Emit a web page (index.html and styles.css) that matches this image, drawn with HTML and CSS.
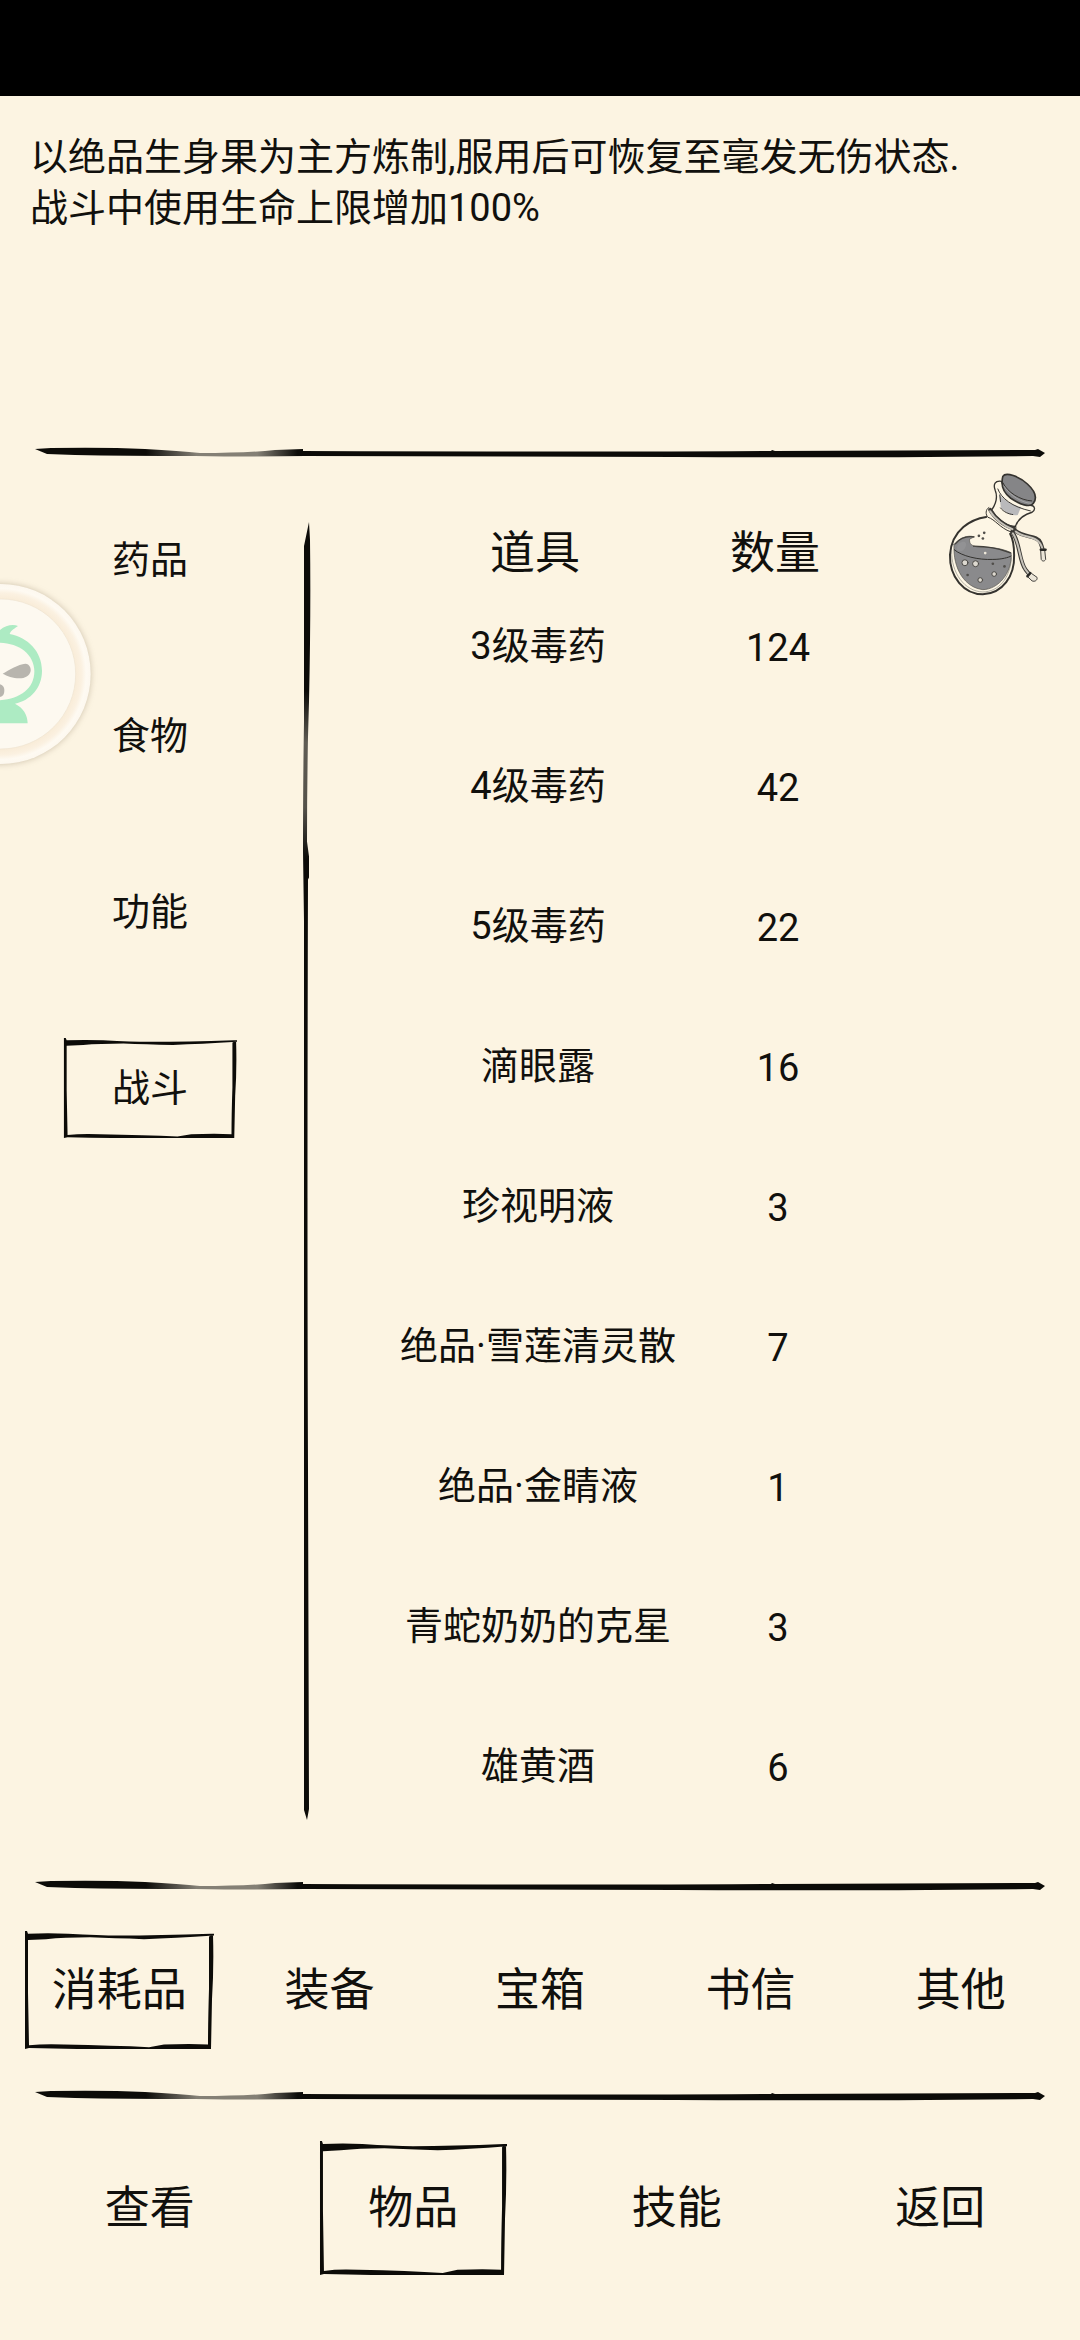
FILE: index.html
```
<!DOCTYPE html>
<html lang="zh-CN">
<head>
    <meta charset="UTF-8">
    <meta name="viewport" content="width=device-width, initial-scale=1">
    <title>物品</title>
    <link rel="stylesheet" href="styles.css">
</head>
<body>

    <!-- 公用的手绘线条 -->
    <svg class="defs" aria-hidden="true">
        <linearGradient id="fade">
            <stop offset="0" stop-color="#0c0b08"/>
            <stop offset=".11" stop-color="#0c0b08"/>
            <stop offset=".16" stop-color="#0c0b08" stop-opacity=".5"/>
            <stop offset=".22" stop-color="#0c0b08" stop-opacity=".5"/>
            <stop offset=".26" stop-color="#0c0b08"/>
            <stop offset="1" stop-color="#0c0b08"/>
        </linearGradient>
        <linearGradient id="fade-v" x1="0" y1="0" x2="0" y2="1">
            <stop offset="0" stop-color="#0c0b08"/>
            <stop offset=".13" stop-color="#0c0b08"/>
            <stop offset=".17" stop-color="#0c0b08" stop-opacity=".65"/>
            <stop offset=".22" stop-color="#0c0b08" stop-opacity=".7"/>
            <stop offset=".26" stop-color="#0c0b08"/>
            <stop offset="1" stop-color="#0c0b08"/>
        </linearGradient>
        <radialGradient id="ring" gradientUnits="userSpaceOnUse" cx="2" cy="342" r="270">
            <stop offset=".82" stop-color="#f8ebd6"/>
            <stop offset=".9" stop-color="#fbf1e1"/>
            <stop offset=".95" stop-color="#fefaf2"/>
            <stop offset="1" stop-color="#fdf8ef"/>
        </radialGradient>
        <symbol id="line" viewBox="0 0 1010 16" preserveAspectRatio="none">
            <path fill="url(#fade)" d="M0 5 L16 4 Q70 3 110 5 Q145 7 165 9 Q210 9 240 6 L268 5 L268 7 Q620 8 736 7 L737 6 L740 7 L1000 6 L1003 5 L1010 9 L1005 13 L998 12 Q800 14 640 13 L270 12 Q220 13 160 12 Q90 12 40 11 L12 10 Z"/>
        </symbol>
        <symbol id="line-v" viewBox="0 0 14 1300" preserveAspectRatio="none">
            <path fill="url(#fade-v)" d="M9 0 L10 18 Q11 90 9 180 L8 215 Q7 270 7 320 L9 335 L9 356 L8 358 Q7 700 8 950 L9 1289 L7 1300 L4 1290 L4 950 Q4 620 4 400 L3 330 Q3 260 4 200 L4 100 L4 24 Z"/>
        </symbol>
        <symbol id="frame" viewBox="0 0 190 130" preserveAspectRatio="none">
            <path d="M1 0 L3 0 L4 3 Q24 2 44 3 Q75 5 95 5 Q135 5 187 3 L190 3 L190 5 Q150 8 120 9 Q90 8 66 7 Q40 7 22 9 L4 10 L4 68 L5 126 Q20 124 40 125 Q90 126 125 128 L140 125 Q168 124 184 125 Q184 100 185 64 L185 6 L189 4 Q190 40 188 75 L187 130 L140 130 Q80 131 5 129 L1 130 L1 68 Z"/>
        </symbol>
    </svg>

    <div class="page">
        <div class="status"></div>

        <div class="desc">
            <p>以绝品生身果为主方炼制,服用后可恢复至毫发无伤状态.</p>
            <p>战斗中使用生命上限增加100%</p>
        </div>

        <svg class="line"><use href="#line"/></svg>

        <div class="main">
            <div class="category">
                <button>药品</button>
                <button>食物</button>
                <button>功能</button>
                <button class="current">战斗<svg class="frame"><use href="#frame"/></svg></button>
            </div>
            <svg class="line-v"><use href="#line-v"/></svg>
            <table class="items">
                <thead>
                    <tr><th class="name">道具</th><th class="num">数量</th></tr>
                </thead>
                <tbody>
                    <tr><td>3级毒药</td><td class="num">124</td></tr>
                    <tr><td>4级毒药</td><td class="num">42</td></tr>
                    <tr><td>5级毒药</td><td class="num">22</td></tr>
                    <tr><td>滴眼露</td><td class="num">16</td></tr>
                    <tr><td>珍视明液</td><td class="num">3</td></tr>
                    <tr><td>绝品·雪莲清灵散</td><td class="num">7</td></tr>
                    <tr><td>绝品·金睛液</td><td class="num">1</td></tr>
                    <tr><td>青蛇奶奶的克星</td><td class="num">3</td></tr>
                    <tr><td>雄黄酒</td><td class="num">6</td></tr>
                </tbody>
            </table>
            <svg class="bottle" viewBox="50 60 310 385" fill="none" stroke-linecap="round" stroke-linejoin="round">
                <!-- 瓶身 -->
                <path d="M168 201 C125 207 64 238 59 315 C57 382 101 434 158 434 C218 432 254 378 252 316 C252 288 249 268 240 252" fill="#fdf6e5" stroke="#35332f" stroke-width="6"/>
                <path d="M64 302 C62 370 103 425 158 427 C205 426 240 387 244 324" stroke="#8b8982" stroke-width="2"/>
                <!-- 药水 -->
                <path d="M71 284 C88 264 111 255 132 261 L118 268 C116 282 126 291 148 292 C187 291 222 298 243 309 C247 369 205 419 158 420 C105 414 67 359 71 284 Z" fill="#8a8a8c" stroke="#55534f" stroke-width="2"/>
                <path d="M72 300 C94 319 144 331 188 329 C215 329 235 323 243 319" stroke="#33322f" stroke-width="3"/>
                <path d="M75 282 C89 265 110 258 131 261 M130 289 C175 289 213 298 241 309" stroke="#42403c" stroke-width="4"/>
                <path d="M82 286 C94 270 113 274 106 291 C99 308 87 306 78 300" fill="#929294"/>
                <g fill="#ddd9d0" stroke="#4b4945" stroke-width="3">
                    <circle cx="104" cy="339" r="9"/>
                    <circle cx="136" cy="342" r="9"/>
                    <circle cx="192" cy="373" r="7"/>
                    <circle cx="150" cy="391" r="7"/>
                </g>
                <g fill="#504e4a">
                    <circle cx="112" cy="376" r="4"/>
                    <circle cx="188" cy="342" r="4"/>
                    <circle cx="223" cy="350" r="4"/>
                    <circle cx="146" cy="258" r="4"/>
                    <circle cx="162" cy="249" r="4"/>
                    <circle cx="158" cy="266" r="4"/>
                </g>
                <circle cx="165" cy="310" r="4" fill="#eee8da"/>
                <!-- 瓶颈和瓶塞 -->
                <path d="M214 94 C195 91 188 102 195 121 C202 138 200 158 184 181 C201 209 230 230 256 230 C263 207 285 193 306 187 C319 178 313 166 300 166 L217 102 Z" fill="#fdf6e5" stroke="#35332f" stroke-width="4"/>
                <path d="M207 133 L212 172 C225 190 246 199 263 195 L273 171 C244 166 225 151 207 133 Z" fill="#b9b9bb"/>
                <path d="M203 117 C213 145 246 171 301 183 M211 174 C221 187 235 192 248 194 M209 135 L211 155" stroke="#3a3834" stroke-width="3"/>
                <path d="M218 79 C227 64 268 80 292 102 C316 124 321 145 310 160 C300 175 269 163 242 145 C216 125 212 102 218 79 Z" fill="#858587" stroke="#35332f" stroke-width="5"/>
                <path d="M218 98 C232 127 270 151 305 153" stroke="#35332f" stroke-width="3"/>
                <path d="M221 108 C239 137 278 160 303 160" stroke="#b6b6b6" stroke-width="2"/>
                <!-- 绳子 -->
                <g stroke="#3b3935" stroke-width="12">
                    <path d="M180 180 C193 204 223 229 250 235"/>
                    <path d="M252 240 C281 266 320 254 331 278 C335 288 336 292 338 299"/>
                    <path d="M246 246 C270 276 266 333 286 359 L299 375"/>
                </g>
                <g stroke="#c6c2b9" stroke-width="6">
                    <path d="M180 184 C193 207 223 229 247 238"/>
                    <path d="M256 244 C281 266 318 257 331 282 C335 289 336 292 337 297"/>
                    <path d="M248 250 C269 278 268 334 286 359 L297 373"/>
                </g>
                <path d="M176 173 C165 178 166 195 173 202 C194 208 210 235 242 246 C257 249 260 235 256 228" stroke="#35332f" stroke-width="3"/>
                <path d="M333 300 L344 300 L347 329 C343 336 336 335 334 330 Z M291 378 L304 371 L321 383 C323 392 314 397 307 394 Z" fill="#ece6d8" stroke="#44423e" stroke-width="3"/>
                <path d="M332 300 L347 300 M292 380 L301 370" stroke="#292825" stroke-width="7"/>
            </svg>
        </div>

        <svg class="line"><use href="#line"/></svg>

        <div class="tabs">
            <button class="current">消耗品<svg class="frame"><use href="#frame"/></svg></button>
            <button>装备</button>
            <button>宝箱</button>
            <button>书信</button>
            <button>其他</button>
        </div>

        <svg class="line"><use href="#line"/></svg>

        <div class="nav">
            <button>查看</button>
            <button class="current">物品<svg class="frame"><use href="#frame"/></svg></button>
            <button>技能</button>
            <button>返回</button>
        </div>

        <!-- 悬浮球 -->
        <button class="ball" aria-label="悬浮球">
            <svg viewBox="0 0 360 660">
                <circle class="ball-outer" cx="2" cy="342" r="270"/>
                <circle class="ball-inner" cx="2" cy="342" r="225"/>
                <path fill="#adebc3" d="M0 210 C16 196 39 192 54 198 C46 205 33 209 29 222 C84 232 126 275 126 332 C126 384 91 421 45 431 C69 443 83 464 83 490 L0 490 Z"/>
                <path fill="#fdf9f0" d="M0 248 C58 250 102 282 103 334 C103 385 62 416 0 421 Z"/>
                <path fill="#b8b5ae" d="M8 341 C29 329 54 313 76 311 C89 312 93 324 92 333 C89 348 75 355 58 355 C39 355 21 348 8 341 Z"/>
                <path fill="#b8b5ae" d="M0 373 C10 376 13 383 13 392 C13 402 9 409 0 411 Z"/>
            </svg>
        </button>
    </div>

</body>
</html>
```

FILE: styles.css
```
*{
    margin: 0;
    padding: 0;
    box-sizing: border-box;
}
body{
    background-color: #fcf4e2;
    color: #11100d;
    font-family: Roboto, "Noto Sans CJK SC", sans-serif;
    font-size: 38px;
    line-height: 51px;
}
button{
    position: relative;
    border: none;
    background: none;
    color: inherit;
    font: inherit;
    cursor: pointer;
}
.defs{
    position: absolute;
    width: 0;
    height: 0;
}
.page{
    position: relative;
    display: flex;
    flex-direction: column;
    min-height: 100vh;
}
.status{
    height: 96px;
    background-color: #000;
}
.desc{
    min-height: 348px;
    padding: 36px 30px;
}
.line{
    display: block;
    height: 16px;
    margin: 0 35px;
}
.frame{
    position: absolute;
    left: 0;
    top: 0;
    width: 100%;
    height: 100%;
    fill: #0c0b08;
}

/* 中间区域 */
.main{
    display: flex;
    padding-bottom: 41px;
}
.category{
    display: flex;
    flex-direction: column;
    align-items: center;
    gap: 76px;
    width: 300px;
    padding-top: 50px;
}
.category button{
    width: 174px;
    height: 100px;
}
.line-v{
    width: 14px;
    height: auto;
    margin: 62px 0 16px;
}
.items{
    margin: 72px 0 0 74px;
    border-collapse: collapse;
    text-align: center;
}
.items th{
    height: 44px;
    padding-right: 6px;
    font-size: 45px;
    font-weight: 400;
    line-height: 44px;
}
.items td{
    height: 140px;
}
.items .name{
    width: 300px;
}
.items .num{
    width: 180px;
}
.items td.num{
    padding-top: 4px;
}
.bottle{
    width: 103px;
    height: 128px;
    margin: 10px 30px 0 auto;
}

/* 底部两排 */
.tabs,.nav{
    display: grid;
    align-items: center;
    justify-items: center;
    font-size: 45px;
}
.tabs{
    grid-template-columns: repeat(5, 1fr);
    height: 194px;
    padding: 0 14px;
}
.tabs button{
    width: 190px;
    height: 118px;
}
.nav{
    grid-template-columns: repeat(4, 1fr);
    height: 210px;
    padding: 0 8px 0 18px;
}
.nav button{
    width: 188px;
    height: 134px;
}

.ball{
    position: absolute;
    left: 0;
    top: 560px;
    width: 120px;
    height: 220px;
}
.ball svg{
    display: block;
    width: 100%;
    height: 100%;
}
.ball-outer{
    fill: url(#ring);
    filter: drop-shadow(0 0 10px rgba(120,100,70,.35));
}
.ball-inner{
    fill: #fdf9f0;
    stroke: #efe4d2;
    stroke-width: 2;
}
```
